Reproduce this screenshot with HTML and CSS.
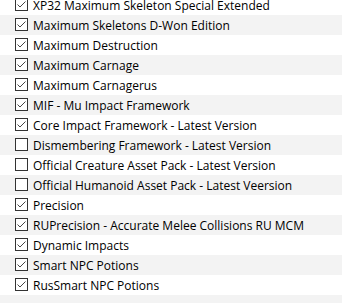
FILE: index.html
```html
<!DOCTYPE html>
<html lang="en">
<head>
    <meta charset="UTF-8">
    <title>Plugin List</title>
    <link rel="stylesheet" href="styles.css">
</head>
<body>
    <ul class="mod-list" id="modList"></ul>

    <script>
        (function() {
            const mods = [
                ["XP32 Maximum Skeleton Special Extended", true],
                ["Maximum Skeletons D-Won Edition", true],
                ["Maximum Destruction", true],
                ["Maximum Carnage", true],
                ["Maximum Carnagerus", true],
                ["MIF - Mu Impact Framework", true],
                ["Core Impact Framework - Latest Version", true],
                ["Dismembering Framework - Latest Version", false],
                ["Official Creature Asset Pack - Latest Version", false],
                ["Official Humanoid Asset Pack - Latest Veersion", false],
                ["Precision", true],
                ["RUPrecision - Accurate Melee Collisions RU MCM", true],
                ["Dynamic Impacts", true],
                ["Smart NPC Potions", true],
                ["RusSmart NPC Potions", true]
            ];

            const box = `<svg class="check" width="13" height="13" viewBox="0 0 13 13">
                <rect x="0.5" y="0.5" width="12" height="12" fill="#fff" stroke="#333"/>
                <polyline class="mark" points="2.5,6.5 5,9 10.5,3.5" fill="none" stroke="#444" stroke-width="1"/>
            </svg>`;

            const list = document.getElementById("modList");
            mods.forEach(([name, on]) => {
                const li = document.createElement("li");
                li.className = on ? "mod on" : "mod";
                li.innerHTML = box + `<span class="name">${name}</span>`;
                list.appendChild(li);
            });
            const tail = document.createElement("li");
            tail.className = "mod";
            list.appendChild(tail);
        })();
    </script>
</body>
</html>
```

FILE: styles.css
```css
body {
    margin: 0;
    background: #fff;
    font-family: "Open Sans", "Noto Sans", sans-serif;
    font-size: 12px;
    color: #000;
    overflow: hidden;
}

.mod-list {
    list-style: none;
    margin: -5px 0 0 0;
    padding: 0;
}

.mod {
    display: flex;
    align-items: flex-start;
    height: 20px;
    padding-left: 15px;
    box-sizing: border-box;
}
.mod:nth-child(even) {
    background: #f3f3f3;
}

.check {
    flex: none;
    margin-top: 3px;
}
.check .mark {
    display: none;
}
.mod.on .check .mark {
    display: inline;
}

.name {
    margin-left: 5px;
    line-height: 20px;
    padding-top: 1px;
    white-space: nowrap;
}
```
